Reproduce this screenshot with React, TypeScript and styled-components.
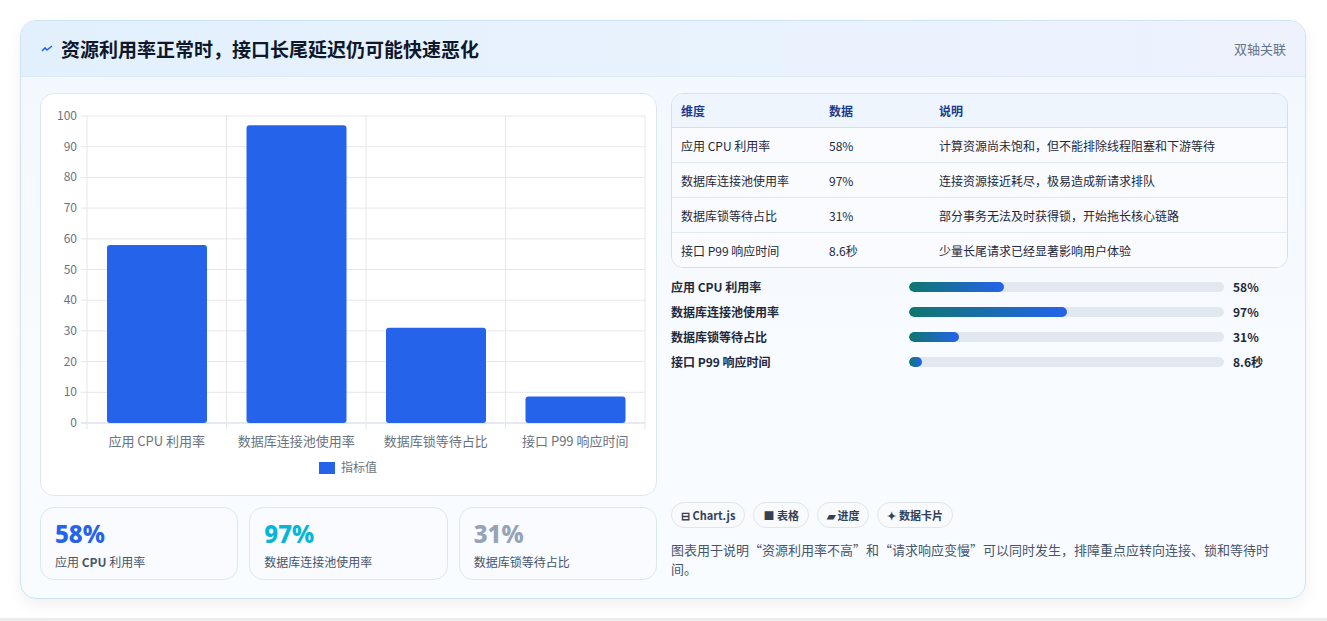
import React from "react";
import styled, { createGlobalStyle } from "styled-components";

const G = createGlobalStyle`
  body { margin:0; background:#f3f4f6; font-family:"Noto Sans CJK SC","Noto Sans",sans-serif; }
  #root { height:621px; background:linear-gradient(#fff 0,#fff 618px,#ececec 618px); padding:20px 20px 0 20px; box-sizing:border-box; }
`;
const Card = styled.div`
  width:1286px; height:579px; box-sizing:border-box; border:1px solid #cfe3f1; border-radius:16px; overflow:hidden;
  background:linear-gradient(180deg,#f1f8fe,#f8fbff 60%,#f9fcff); box-shadow:0 6px 16px rgba(0,0,0,.06);
  display:flex; flex-direction:column;
`;
const Header = styled.div`
  height:55px; flex:none; display:flex; align-items:center; justify-content:space-between; padding:0 19px 0 20px;
  background:linear-gradient(90deg,#e2f0fd,#eaf3fd 70%,#eef2fd); border-bottom:1px solid #dde9f4;
`;
const Title = styled.h1`margin:0; font-size:19px; font-weight:700; color:#0f172a; display:flex; align-items:center; gap:8px;`;
const Tag = styled.span`font-size:13px; color:#64748b;`;
const Body = styled.div`flex:1; display:grid; grid-template-columns:617px 617px; gap:14px; padding:16px 19px 18px 19px;`;
const Col = styled.div`display:flex; flex-direction:column; gap:11px;`;
const ChartBox = styled.div`height:403px; box-sizing:border-box; border:1px solid #dde7f1; border-radius:14px; background:#fff;`;
const Stats = styled.div`display:grid; grid-template-columns:repeat(3,1fr); gap:11px;`;
const Stat = styled.div`height:73px; box-sizing:border-box; border:1px solid #dbe7f3; border-radius:14px; background:#f9fbfe; padding:11px 14px;`;
const Big = styled.div<{c:string}>`font-family:"Noto Sans",sans-serif; font-size:24px; font-weight:800; color:${p=>p.c}; line-height:30px;`;
const StatLbl = styled.div`font-size:12px; color:#475569; margin-top:4px;`;
const Right = styled.div`display:flex; flex-direction:column;`;
const Table = styled.table`border-collapse:separate; border-spacing:0; width:100%; border:1px solid #d3e1ee; border-radius:12px; overflow:hidden; font-size:12px; color:#1e293b;
  th{ text-align:left; font-weight:700; color:#1e3a8a; height:33px; background:#eef5fd; border-bottom:1px solid #d3e1ee; padding:0 9px;}
  td{ height:34px; padding:0 9px; border-bottom:1px solid #e2eaf2; background:#f9fbfe;}
  tr:last-child td{border-bottom:none;}
`;
const Bars = styled.div`display:flex; flex-direction:column; gap:6px; margin-top:9px;`;
const BarRow = styled.div`display:grid; grid-template-columns:229px 315px auto; gap:9px; align-items:center; height:19px; font-size:12px; font-weight:600; color:#1e293b;`;
const Track = styled.div`height:10px; border-radius:5px; background:#e2e8f0; overflow:hidden;`;
const Fill = styled.div`height:100%; border-radius:5px; background:linear-gradient(90deg,#0f766e,#2563eb);`;
const Spacer = styled.div`flex:1;`;
const Chips = styled.div`display:flex; gap:8px;`;
const Chip = styled.span`height:26px; box-sizing:border-box; padding:0 9px; display:inline-flex; align-items:center; gap:4px; border:1px solid #dfe6ee; border-radius:13px; background:#f8fafc; font-size:11px; font-weight:600; color:#334155;`;
const Note = styled.p`margin:12px 0 2px; font-size:13px; color:#475569;`;

const cats = ["应用 CPU 利用率","数据库连接池使用率","数据库锁等待占比","接口 P99 响应时间"];
const vals = [58,97,31,8.6];

function Chart(){
  const L=46,R=604,T=22,B=329,w=(R-L)/4;
  const y=(v:number)=>B-(v/100)*(B-T);
  return (
    <svg width="616" height="401" style={{display:"block"}} fontFamily='"Noto Sans CJK SC",sans-serif'>
      {Array.from({length:11},(_,i)=>i*10).map(v=>(
        <g key={v}>
          <line x1={L-6} x2={R} y1={y(v)} y2={y(v)} stroke={v===0?"#cbd5e1":"#e5e7eb"}/>
          <text x={L-10} y={y(v)+4} fontSize="12" fill="#6b7280" textAnchor="end">{v}</text>
        </g>))}
      {[0,1,2,3,4].map(i=><line key={i} x1={L+i*w} x2={L+i*w} y1={T} y2={B+6} stroke="#e5e7eb"/>)}
      {vals.map((v,i)=>(<rect key={i} x={L+i*w+20} y={y(v)} width={100} height={B-y(v)} rx="3" fill="#2563eb"/>))}
      {cats.map((c,i)=><text key={i} x={L+i*w+w/2} y={352} fontSize="13" fill="#6b7280" textAnchor="middle">{c}</text>)}
      <rect x={278} y={368} width={16} height={12} fill="#2563eb"/>
      <text x={300} y={378} fontSize="12" fill="#6b7280">指标值</text>
    </svg>
  );
}

export default function App(){
  const rows=[["应用 CPU 利用率","58%","计算资源尚未饱和，但不能排除线程阻塞和下游等待"],["数据库连接池使用率","97%","连接资源接近耗尽，极易造成新请求排队"],["数据库锁等待占比","31%","部分事务无法及时获得锁，开始拖长核心链路"],["接口 P99 响应时间","8.6秒","少量长尾请求已经显著影响用户体验"]];
  const pct=[30,50,16,4];
  return (<>
    <G/>
    <Card>
      <Header>
        <Title><svg width="12" height="10" viewBox="0 0 12 10"><path d="M1 7 L4 4 L6 6 L11 2" stroke="#2563eb" strokeWidth="1.6" fill="none"/></svg>资源利用率正常时，接口长尾延迟仍可能快速恶化</Title>
        <Tag>双轴关联</Tag>
      </Header>
      <Body>
        <Col>
          <ChartBox><Chart/></ChartBox>
          <Stats>
            <Stat><Big c="#2563eb">58%</Big><StatLbl>应用 <b>CPU</b> 利用率</StatLbl></Stat>
            <Stat><Big c="#06b6d4">97%</Big><StatLbl>数据库连接池使用率</StatLbl></Stat>
            <Stat><Big c="#94a3b8">31%</Big><StatLbl>数据库锁等待占比</StatLbl></Stat>
          </Stats>
        </Col>
        <Right>
          <Table>
            <thead><tr><th style={{width:130}}>维度</th><th style={{width:92}}>数据</th><th>说明</th></tr></thead>
            <tbody>{rows.map(r=><tr key={r[0]}><td>{r[0]}</td><td>{r[1]}</td><td>{r[2]}</td></tr>)}</tbody>
          </Table>
          <Bars>
            {rows.map((r,i)=><BarRow key={r[0]}><span>{r[0]}</span><Track><Fill style={{width:pct[i]+"%"}}/></Track><span>{r[1]}</span></BarRow>)}
          </Bars>
          <Spacer/>
          <Chips>
            <Chip>⊟ Chart.js</Chip><Chip>■ 表格</Chip><Chip>▰ 进度</Chip><Chip>✦ 数据卡片</Chip>
          </Chips>
          <Note>图表用于说明“资源利用率不高”和“请求响应变慢”可以同时发生，排障重点应转向连接、锁和等待时间。</Note>
        </Right>
      </Body>
    </Card>
  </>);
}
